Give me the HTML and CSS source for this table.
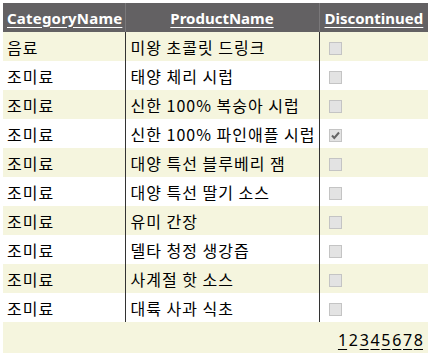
FILE: index.html
```html
<!DOCTYPE html>
<html>
<head>
<meta charset="utf-8">
<link rel="stylesheet" href="styles.css">
</head>
<body>
<table class="grid">
  <thead>
    <tr class="head">
      <th class="c1 left"><a href="#">CategoryName</a></th>
      <th class="c2"><a href="#">ProductName</a></th>
      <th class="c3"><a href="#">Discontinued</a></th>
    </tr>
  </thead>
  <tbody>
    <tr class="alt"><td class="c1">음료</td><td class="c2">미왕 초콜릿 드링크</td><td class="c3"><span class="cb"></span></td></tr>
    <tr><td class="c1">조미료</td><td class="c2">태양 체리 시럽</td><td class="c3"><span class="cb"></span></td></tr>
    <tr class="alt"><td class="c1">조미료</td><td class="c2">신한 100% 복숭아 시럽</td><td class="c3"><span class="cb"></span></td></tr>
    <tr><td class="c1">조미료</td><td class="c2">신한 100% 파인애플 시럽</td><td class="c3"><span class="cb checked"><svg viewBox="0 0 13 13" width="13" height="13"><path d="M3 6.5 L5.3 9 L10 3.5" fill="none" stroke="#666" stroke-width="2"/></svg></span></td></tr>
    <tr class="alt"><td class="c1">조미료</td><td class="c2">대양 특선 블루베리 잼</td><td class="c3"><span class="cb"></span></td></tr>
    <tr><td class="c1">조미료</td><td class="c2">대양 특선 딸기 소스</td><td class="c3"><span class="cb"></span></td></tr>
    <tr class="alt"><td class="c1">조미료</td><td class="c2">유미 간장</td><td class="c3"><span class="cb"></span></td></tr>
    <tr><td class="c1">조미료</td><td class="c2">델타 청정 생강즙</td><td class="c3"><span class="cb"></span></td></tr>
    <tr class="alt"><td class="c1">조미료</td><td class="c2">사계절 핫 소스</td><td class="c3"><span class="cb"></span></td></tr>
    <tr><td class="c1">조미료</td><td class="c2">대륙 사과 식초</td><td class="c3"><span class="cb"></span></td></tr>
  </tbody>
  <tfoot>
    <tr class="pager">
      <td colspan="3"><a href="#">1</a><span>2</span><a href="#">3</a><a href="#">4</a><a href="#">5</a><a href="#">6</a><a href="#">7</a><a href="#">8</a></td>
    </tr>
  </tfoot>
</table>
</body>
</html>
```
FILE: styles.css
```css
html, body {
  margin: 0;
  padding: 0;
  background: #ffffff;
}
body {
  padding: 3px;
  font-family: "Noto Sans", "Noto Sans CJK KR", sans-serif;
  color: #000;
}
.grid {
  border-collapse: collapse;
  width: 425px;
  table-layout: fixed;
}
.grid th, .grid td {
  padding: 0 5px;
  height: 29px;
  box-sizing: border-box;
}
.c1 { width: 122px; }
.c2 { width: 194px; }
.c3 { width: 109px; }
.head {
  background: #636163;
}
.head th {
  height: 29px;
  font-size: 15px;
  font-weight: bold;
  text-align: center;
  border-left: 1px solid #7a787a;
  white-space: nowrap;
}
.head th.left { text-align: left; border-left: none; padding-left: 4px; letter-spacing: 0.2px; }
.head th.c3 { text-align: left; padding-left: 5px; }
.head a {
  color: #ffffff;
  text-decoration: underline;
  text-underline-offset: 3px;
}
tbody td {
  font-family: "Noto Sans CJK KR", sans-serif;
  font-size: 16px;
  letter-spacing: 1px;
  white-space: nowrap;
  line-height: 20px;
}
tbody td.c1 { padding-left: 4px; }
tbody td.c2, tbody td.c3 { border-left: 1px solid #333; }
tbody td.c3 { padding-left: 9px; }
.alt { background: #f5f5de; }
.cb {
  display: inline-block;
  width: 11px;
  height: 11px;
  border: 1px solid #c4c4c4;
  background: #e3e3e3;
  vertical-align: middle;
  position: relative;
  top: -1px;
}
.cb svg { position: absolute; left: -1px; top: -1px; }
.pager { background: #f5f5de; }
.pager td {
  height: 31px;
  text-align: right;
  padding-right: 5px;
  padding-top: 4px;
  font-size: 16px;
  font-family: "Noto Sans", sans-serif;
}
.pager a, .pager span {
  color: #000;
  margin-left: 1.7px;
}
.pager a { text-decoration: underline; text-underline-offset: 3px; }
```
